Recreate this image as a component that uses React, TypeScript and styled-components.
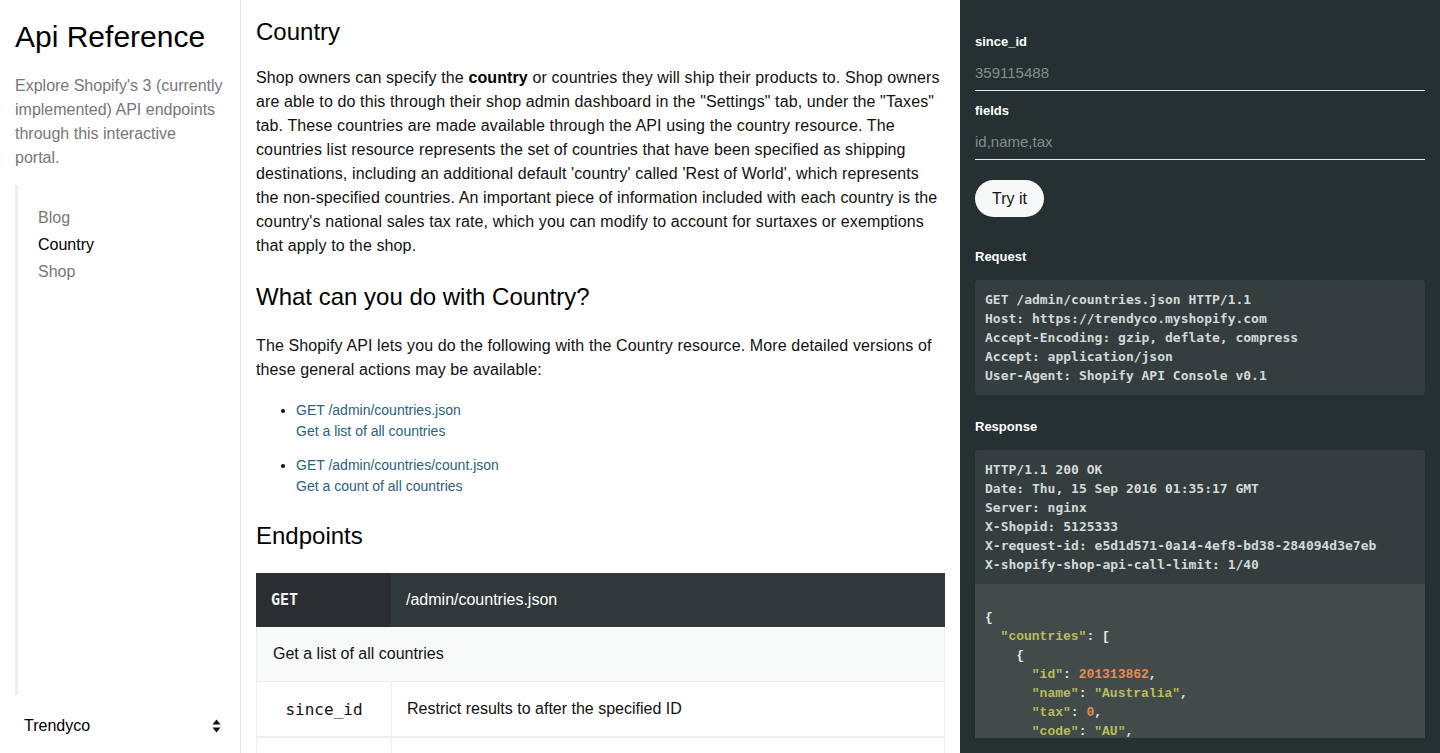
import React from 'react';
import styled, { createGlobalStyle } from 'styled-components';

const GlobalStyle = createGlobalStyle`
  html, body {
    margin: 0;
    padding: 0;
    height: 100%;
    overflow: hidden;
  }
  body {
    font-family: "Liberation Sans", Arial, sans-serif;
    color: #111;
    background: #fff;
  }
  * { box-sizing: border-box; }
`;

const requestLines = [
  'GET /admin/countries.json HTTP/1.1',
  'Host: https://trendyco.myshopify.com',
  'Accept-Encoding: gzip, deflate, compress',
  'Accept: application/json',
  'User-Agent: Shopify API Console v0.1',
];

const responseHeaders = [
  'HTTP/1.1 200 OK',
  'Date: Thu, 15 Sep 2016 01:35:17 GMT',
  'Server: nginx',
  'X-Shopid: 5125333',
  'X-request-id: e5d1d571-0a14-4ef8-bd38-284094d3e7eb',
  'X-shopify-shop-api-call-limit: 1/40',
];

const App: React.FC = () => {
  return (
    <Layout>
      <GlobalStyle />
      <Sidebar>
        <Brand>Api Reference</Brand>
        <Intro>
          Explore Shopify's 3 (currently
          <br />
          implemented) API endpoints
          <br />
          through this interactive
          <br />
          portal.
        </Intro>
        <Nav>
          <NavItem>Blog</NavItem>
          <NavItem active>Country</NavItem>
          <NavItem>Shop</NavItem>
        </Nav>
        <ShopSelect>
          <span>Trendyco</span>
          <svg width="9" height="14" viewBox="0 0 9 14">
            <path d="M4.5 0.5 L8.5 5.5 L0.5 5.5 Z" fill="#111" />
            <path d="M4.5 13.5 L8.5 8.5 L0.5 8.5 Z" fill="#111" />
          </svg>
        </ShopSelect>
      </Sidebar>

      <Main>
        <Heading first>Country</Heading>
        <Paragraph>
          Shop owners can specify the <b>country</b> or countries they will ship their products to. Shop owners
          are able to do this through their shop admin dashboard in the "Settings" tab, under the "Taxes"
          tab. These countries are made available through the API using the country resource. The
          countries list resource represents the set of countries that have been specified as shipping
          destinations, including an additional default 'country' called 'Rest of World', which represents
          the non-specified countries. An important piece of information included with each country is the
          country's national sales tax rate, which you can modify to account for surtaxes or exemptions
          that apply to the shop.
        </Paragraph>

        <Heading>What can you do with Country?</Heading>
        <Paragraph>
          The Shopify API lets you do the following with the Country resource. More detailed versions of
          these general actions may be available:
        </Paragraph>
        <ActionList>
          <ActionItem>
            <ActionLink>GET /admin/countries.json</ActionLink>
            <ActionLink>Get a list of all countries</ActionLink>
          </ActionItem>
          <ActionItem>
            <ActionLink>GET /admin/countries/count.json</ActionLink>
            <ActionLink>Get a count of all countries</ActionLink>
          </ActionItem>
        </ActionList>

        <Heading>Endpoints</Heading>
        <EndpointTable>
          <HeadRow>
            <MethodCell>GET</MethodCell>
            <PathCell>/admin/countries.json</PathCell>
          </HeadRow>
          <SummaryRow>Get a list of all countries</SummaryRow>
          <ParamRow>
            <ParamName>since_id</ParamName>
            <ParamDesc>Restrict results to after the specified ID</ParamDesc>
          </ParamRow>
          <ParamRow>
            <ParamName>fields</ParamName>
            <ParamDesc>Comma-separated list of fields to include in the response</ParamDesc>
          </ParamRow>
        </EndpointTable>
      </Main>

      <Console>
        <Field>
          <FieldLabel>since_id</FieldLabel>
          <FieldInput placeholder="359115488" />
        </Field>
        <Field>
          <FieldLabel>fields</FieldLabel>
          <FieldInput placeholder="id,name,tax" />
        </Field>
        <TryButton>Try it</TryButton>

        <SectionLabel gap={30}>Request</SectionLabel>
        <CodeBox>
          <Pre>{requestLines.join('\n')}</Pre>
        </CodeBox>

        <SectionLabel gap={22}>Response</SectionLabel>
        <ResponseBox>
          <Pre>{responseHeaders.join('\n')}</Pre>
          <JsonBody>
            <Json>
              <P>{'{'}</P>
              {'\n  '}<K>"countries"</K><P>: [</P>
              {'\n    '}<P>{'{'}</P>
              {'\n      '}<K>"id"</K><P>: </P><N>201313862</N><P>,</P>
              {'\n      '}<K>"name"</K><P>: </P><K>"Australia"</K><P>,</P>
              {'\n      '}<K>"tax"</K><P>: </P><N>0</N><P>,</P>
              {'\n      '}<K>"code"</K><P>: </P><K>"AU"</K><P>,</P>
              {'\n      '}<K>"tax_name"</K><P>: </P><K>"GST"</K><P>,</P>
            </Json>
          </JsonBody>
        </ResponseBox>
      </Console>
    </Layout>
  );
};

export default App;

// Styled components
const Layout = styled.div`
  display: grid;
  grid-template-columns: 241px 719px 480px;
  height: 100vh;
  overflow: hidden;
`;

const Sidebar = styled.aside`
  display: flex;
  flex-direction: column;
  padding: 19px 15px 0;
  border-right: 1px solid #e6e6e6;
  min-height: 0;
`;

const Brand = styled.h1`
  margin: 0;
  font-size: 30px;
  line-height: 36px;
  font-weight: 400;
  color: #000;
`;

const Intro = styled.p`
  margin: 19px 0 0;
  font-size: 16px;
  line-height: 24px;
  color: #777;
  white-space: nowrap;
`;

const Nav = styled.nav`
  flex: 1;
  margin-top: 15px;
  padding: 19px 0 0 20px;
  border-left: 3px solid #eee;
  display: flex;
  flex-direction: column;
`;

const NavItem = styled.a<{ active?: boolean }>`
  font-size: 16px;
  line-height: 27px;
  color: ${(p) => (p.active ? '#000' : '#777')};
`;

const ShopSelect = styled.div`
  height: 58px;
  display: flex;
  align-items: center;
  justify-content: space-between;
  padding: 4px 4px 0 9px;
  font-size: 16px;
  color: #000;
`;

const Main = styled.main`
  padding: 17px 15px 0;
  overflow: hidden;
  min-height: 0;
`;

const Heading = styled.h2<{ first?: boolean }>`
  margin: ${(p) => (p.first ? '0 0 19px' : '24px 0 22px')};
  font-size: 24px;
  line-height: 30px;
  font-weight: 400;
  color: #000;
`;

const Paragraph = styled.p`
  margin: 0;
  font-size: 16px;
  line-height: 24px;
  letter-spacing: 0.12px;
  color: #111;

  b { font-weight: 700; color: #000; }
`;

const ActionList = styled.ul`
  margin: 18px 0 0;
  padding-left: 40px;
  display: flex;
  flex-direction: column;
  gap: 13px;
`;

const ActionItem = styled.li`
  font-size: 14px;
  line-height: 21px;
  color: #111;
`;

const ActionLink = styled.a`
  display: block;
  color: #2a5f7d;
`;

const EndpointTable = styled.div`
  margin-top: 22px;
  display: flex;
  flex-direction: column;
`;

const HeadRow = styled.div`
  display: grid;
  grid-template-columns: 135px 1fr;
  height: 54px;
`;

const MethodCell = styled.div`
  display: flex;
  align-items: center;
  padding-left: 15px;
  background: #2b2e30;
  color: #f1f1f1;
  font-family: "DejaVu Sans Mono", monospace;
  font-weight: 700;
  font-size: 15px;
`;

const PathCell = styled.div`
  display: flex;
  align-items: center;
  padding-left: 15px;
  background: #31383a;
  color: #fff;
  font-size: 16px;
`;

const SummaryRow = styled.div`
  height: 55px;
  display: flex;
  align-items: center;
  padding-left: 16px;
  background: #f8f9f9;
  border: 1px solid #eceeee;
  border-top: none;
  font-size: 16px;
  color: #111;
`;

const ParamRow = styled.div`
  display: grid;
  grid-template-columns: 135px 1fr;
  height: 56px;
  border: 1px solid #eceeee;
  border-top: none;
  border-bottom: 2px solid #eceeee;
`;

const ParamName = styled.div`
  display: flex;
  align-items: center;
  justify-content: center;
  border-right: 1px solid #eceeee;
  font-family: "DejaVu Sans Mono", monospace;
  font-size: 16px;
  color: #111;
`;

const ParamDesc = styled.div`
  display: flex;
  align-items: center;
  padding-left: 15px;
  font-size: 16px;
  color: #111;
`;

const Console = styled.section`
  background: #243031;
  padding: 32px 15px 15px;
  display: flex;
  flex-direction: column;
  min-height: 0;
  overflow: hidden;
  color: #fff;
`;

const Field = styled.label`
  display: flex;
  flex-direction: column;
  margin-bottom: 10px;
`;

const FieldLabel = styled.span`
  font-size: 13px;
  line-height: 20px;
  font-weight: 700;
  color: #fff;
`;

const FieldInput = styled.input`
  height: 39px;
  padding: 2px 0 0;
  border: none;
  border-bottom: 1px solid #e8ebeb;
  background: transparent;
  color: #fff;
  font-family: "Liberation Sans", Arial, sans-serif;
  font-size: 15px;
  outline: none;

  &::placeholder { color: #838c8c; }
`;

const TryButton = styled.button`
  align-self: flex-start;
  margin-top: 10px;
  height: 37px;
  padding: 0 17px;
  border: none;
  border-radius: 19px;
  background: #f7f9f9;
  color: #111;
  font-family: "Liberation Sans", Arial, sans-serif;
  font-size: 16px;
`;

const SectionLabel = styled.h3<{ gap: number }>`
  margin: ${(p) => p.gap}px 0 13px;
  font-size: 13px;
  line-height: 20px;
  font-weight: 700;
  color: #fff;
`;

const CodeBox = styled.div`
  background: #343e3f;
  border-radius: 4px;
  padding: 10px;
`;

const ResponseBox = styled.div`
  flex: 1;
  min-height: 0;
  display: flex;
  flex-direction: column;
  background: #343e3f;
  border-radius: 4px 4px 0 0;
  overflow: hidden;

  & > pre { padding: 10px; }
`;

const Pre = styled.pre`
  margin: 0;
  font-family: "DejaVu Sans Mono", monospace;
  font-weight: 700;
  font-size: 13px;
  line-height: 19px;
  color: #d3d9d9;
`;

const JsonBody = styled.div`
  flex: 1;
  background: #434b4a;
  padding: 24px 10px 0;
  overflow: hidden;
`;

const Json = styled.pre`
  margin: 0;
  font-family: "Liberation Mono", "Courier New", monospace;
  font-weight: 700;
  font-size: 13px;
  line-height: 19px;
  color: #dfe3e3;
`;

const P = styled.span`
  color: #e4e7e7;
`;

const K = styled.span`
  color: #b9bd5c;
`;

const N = styled.span`
  color: #e98a50;
`;
